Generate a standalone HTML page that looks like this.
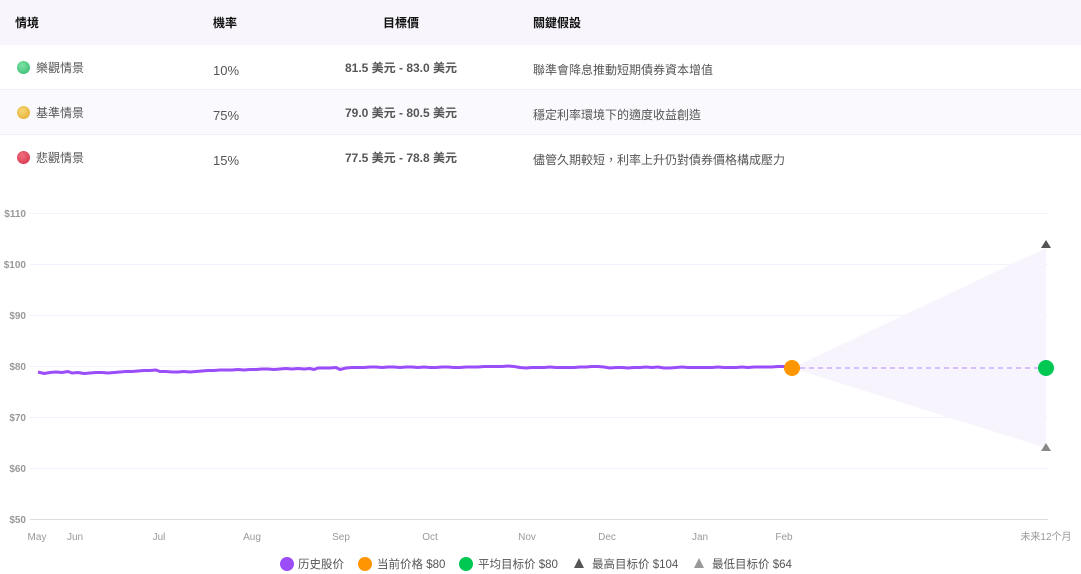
<!DOCTYPE html>
<html><head><meta charset="utf-8"><style>
*{margin:0;padding:0;box-sizing:border-box}
body{width:1081px;height:574px;background:#fff;font-family:"Liberation Sans","Noto Sans CJK TC",sans-serif;position:relative;overflow:hidden}
.row{position:absolute;left:0;width:1081px;height:45px;font-size:12px;color:#555}
.row div{position:absolute;top:1px;line-height:45px}
.hd{background:#f8f6fc;color:#111;font-weight:bold}
.alt{background:#faf9fd}
.bl{border-bottom:1px solid #f1eff7}
.dot{display:inline-block;width:13px;height:13px;border-radius:50%;vertical-align:-2px;margin-right:6px}
.tg{font-weight:bold;color:#555;width:200px;left:301px;text-align:center}
.pc{font-size:13px}
</style></head><body>
<div class="row hd" style="top:0"><div style="left:15px">情境</div><div style="left:213px">機率</div><div style="left:301px;width:200px;text-align:center">目標價</div><div style="left:533px">關鍵假設</div></div>
<div class="row bl" style="top:45px"><div style="left:17px"><span class="dot" style="background:radial-gradient(circle at 40% 35%,#7ee3a6,#2bb868)"></span>樂觀情景</div><div class="pc" style="left:213px;top:3px">10%</div><div class="tg">81.5 美元 - 83.0 美元</div><div style="left:533px;top:3px">聯準會降息推動短期債券資本增值</div></div>
<div class="row alt bl" style="top:90px"><div style="left:17px"><span class="dot" style="background:radial-gradient(circle at 40% 35%,#f7d774,#e0a82a)"></span>基準情景</div><div class="pc" style="left:213px;top:3px">75%</div><div class="tg">79.0 美元 - 80.5 美元</div><div style="left:533px;top:3px">穩定利率環境下的適度收益創造</div></div>
<div class="row" style="top:135px"><div style="left:17px"><span class="dot" style="background:radial-gradient(circle at 40% 35%,#f0707e,#d42a45)"></span>悲觀情景</div><div class="pc" style="left:213px;top:3px">15%</div><div class="tg">77.5 美元 - 78.8 美元</div><div style="left:533px;top:3px">儘管久期較短，利率上升仍對債券價格構成壓力</div></div>
<svg width="1081" height="574" style="position:absolute;left:0;top:0" font-family="Liberation Sans, Noto Sans CJK SC, sans-serif">
<g stroke="#f3f1fb" stroke-width="1">
<line x1="30" x2="1048" y1="213.5" y2="213.5"/><line x1="30" x2="1048" y1="264.5" y2="264.5"/><line x1="30" x2="1048" y1="315.5" y2="315.5"/><line x1="30" x2="1048" y1="366.5" y2="366.5"/><line x1="30" x2="1048" y1="417.5" y2="417.5"/><line x1="30" x2="1048" y1="468.5" y2="468.5"/>
</g>
<line x1="30" x2="1048" y1="519.5" y2="519.5" stroke="#ddd"/>
<g font-size="10" fill="#999" text-anchor="end" font-weight="bold">
<text x="26" y="217">$110</text><text x="26" y="268">$100</text><text x="26" y="319">$90</text><text x="26" y="370">$80</text><text x="26" y="421">$70</text><text x="26" y="472">$60</text><text x="26" y="523">$50</text>
</g>
<g font-size="10" fill="#999" text-anchor="middle">
<text x="37" y="540">May</text><text x="75" y="540">Jun</text><text x="159" y="540">Jul</text><text x="252" y="540">Aug</text><text x="341" y="540">Sep</text><text x="430" y="540">Oct</text><text x="527" y="540">Nov</text><text x="607" y="540">Dec</text><text x="700" y="540">Jan</text><text x="784" y="540">Feb</text><text x="1046" y="540">未来12个月</text>
</g>
<polygon points="792,368 1046,248 1046,448" fill="#f7f4fe"/>
<line x1="800" y1="368" x2="1040" y2="368" stroke="#d6bdfb" stroke-width="2" stroke-dasharray="5,4"/>
<polyline fill="none" stroke="#9b4dfa" stroke-width="3" stroke-linejoin="round" points="38,372 44,373.5 50,372.5 56,372 62,372.5 68,371.5 72,373 78,372.5 84,373.5 90,373 96,372.5 102,372.5 108,373 114,372.5 120,372 126,371.5 132,371.5 138,371 144,370.5 150,370.5 156,370 160,371.5 166,371.5 172,372 178,372 184,371.5 190,372 196,371.5 202,371 208,370.5 214,370.5 220,370 226,370 232,370 238,369.5 244,370 250,369.5 256,369.5 262,369 268,369 274,369.5 280,369 286,368.5 292,369 298,368.5 304,369 310,368.5 314,369.5 318,368 324,368 330,368 336,367.5 340,369.5 346,368 352,367.5 358,367.5 364,367.5 370,367 376,367 382,367.5 388,367 394,367 400,367.5 406,367 412,367 418,367.5 424,367 430,367.5 436,367.5 442,367 448,367 454,367.5 460,367.5 466,367 472,367 478,367 484,366.5 490,366.5 496,366.5 502,366.5 508,366 514,366.5 520,367.5 526,368 532,367.5 538,367.5 544,367.5 550,367 556,367.5 562,367.5 568,367.5 574,367.5 580,367 586,367 592,366.5 598,366.5 604,367 610,368 616,367.5 622,367.5 628,368 634,367.5 640,367.5 646,367 652,367.5 658,367 664,368 670,368 676,367.5 682,367 688,367.5 694,367.5 700,367.5 706,367.5 712,367.5 718,367 724,367.5 730,367.5 736,367.5 742,367 748,367.5 754,367 760,367 766,367 772,367 778,366.5 784,366.5 788,368 792,368"/>
<circle cx="792" cy="368" r="8" fill="#ff9500"/>
<circle cx="1046" cy="368" r="8" fill="#00c853"/>
<polygon points="1046,240 1051,248 1041,248" fill="#555"/>
<polygon points="1046,443 1051,451 1041,451" fill="#888"/>
<g font-size="11.5" fill="#555">
<circle cx="287" cy="564" r="7" fill="#9b4dfa"/><text x="298" y="568">历史股价</text>
<circle cx="365" cy="564" r="7" fill="#ff9500"/><text x="377" y="568">当前价格 $80</text>
<circle cx="466" cy="564" r="7" fill="#00c853"/><text x="478" y="568">平均目标价 $80</text>
<polygon points="579,558 584,568 574,568" fill="#555"/><text x="592" y="568">最高目标价 $104</text>
<polygon points="699,558 704,568 694,568" fill="#999"/><text x="712" y="568">最低目标价 $64</text>
</g>
</svg>
</body></html>
